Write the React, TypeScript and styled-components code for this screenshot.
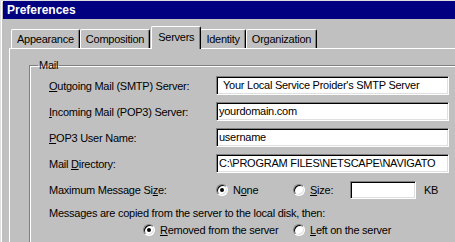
import React from 'react';
import styled, { createGlobalStyle } from 'styled-components';

const GRAY = '#c0c0c0';
const LIGHT = '#dfdfdf';
const SHADOW = '#808080';
const NAVY = '#000080';

const GlobalStyle = createGlobalStyle`
  html, body {
    margin: 0;
    padding: 0;
    background: ${GRAY};
    overflow: hidden;
  }
  body {
    font-family: "Liberation Sans", Arial, sans-serif;
    font-size: 11px;
    letter-spacing: -0.25px;
    color: #000;
  }
`;

interface RadioProps {
  checked?: boolean;
}

const App = () => {
  const tabs = ['Appearance', 'Composition', 'Servers', 'Identity', 'Organization'];

  return (
    <>
      <GlobalStyle />
      <Window>
        <TitleBar>Preferences</TitleBar>
        <TabRow>
          {tabs.map((t) => (
            <Tab key={t} selected={t === 'Servers'}>{t}</Tab>
          ))}
        </TabRow>
        <Panel>
          <Group>
            <Legend>Mail</Legend>
            <Rows>
              <FieldRow>
                <Label><u>O</u>utgoing Mail (SMTP) Server:</Label>
                <TextBox indent={4}>Your Local Service Proider's SMTP Server</TextBox>
              </FieldRow>
              <FieldRow>
                <Label><u>I</u>ncoming Mail (POP3) Server:</Label>
                <TextBox>yourdomain.com</TextBox>
              </FieldRow>
              <FieldRow>
                <Label><u>P</u>OP3 User Name:</Label>
                <TextBox>username</TextBox>
              </FieldRow>
              <FieldRow>
                <Label>Mail <u>D</u>irectory:</Label>
                <TextBox>C:\PROGRAM FILES\NETSCAPE\NAVIGATO</TextBox>
              </FieldRow>
              <FieldRow>
                <Label>Maximum Message Si<u>z</u>e:</Label>
                <Option width={77}>
                  <Radio checked />
                  <span>N<u>o</u>ne</span>
                </Option>
                <Option width={57}>
                  <Radio />
                  <span><u>S</u>ize:</span>
                </Option>
                <SmallBox />
                <Unit>KB</Unit>
              </FieldRow>
              <Note>Messages are copied from the server to the local disk, then:</Note>
              <ChoiceRow>
                <Option width={150}>
                  <Radio checked />
                  <span><u>R</u>emoved from the server</span>
                </Option>
                <Option>
                  <Radio />
                  <span><u>L</u>eft on the server</span>
                </Option>
              </ChoiceRow>
            </Rows>
          </Group>
        </Panel>
      </Window>
    </>
  );
};

export default App;

const Window = styled.div`
  width: 470px;
  height: 260px;
  border-top: 1px solid ${LIGHT};
  border-left: 1px solid ${LIGHT};
  box-shadow: inset 1px 1px #fff;
  padding-left: 2px;
  background: ${GRAY};
`;

const TitleBar = styled.div`
  height: 18px;
  background: ${NAVY};
  color: #fff;
  font-size: 12px;
  font-weight: bold;
  letter-spacing: 0;
  line-height: 18px;
  padding-left: 4px;
`;

const TabRow = styled.div`
  display: flex;
  align-items: flex-end;
  height: 22px;
  margin-top: 7px;
  margin-left: 8px;
  position: relative;
  z-index: 1;
`;

const Tab = styled.div<{ selected: boolean }>`
  height: ${({ selected }) => (selected ? 23 : 19)}px;
  margin: ${({ selected }) => (selected ? '0 -1px -1px 1px' : '0')};
  padding: 0 ${({ selected }) => (selected ? 6 : 5)}px;
  box-sizing: border-box;
  display: flex;
  align-items: center;
  padding-bottom: ${({ selected }) => (selected ? 3 : 0)}px;
  background: ${GRAY};
  border-top: 1px solid #fff;
  border-left: 1px solid #fff;
  border-right: 1px solid #000;
  border-radius: 2px 2px 0 0;
  box-shadow: inset -1px 0 ${SHADOW};
  position: relative;
  z-index: ${({ selected }) => (selected ? 2 : 1)};
  white-space: nowrap;
`;

const Panel = styled.div`
  margin-left: 6px;
  border-top: 1px solid #fff;
  border-left: 1px solid #fff;
  padding: 10px 0 0 19px;
  height: 200px;
`;

const Group = styled.fieldset`
  margin: 0;
  padding: 0 0 20px 8px;
  border: 1px solid ${SHADOW};
  box-shadow: inset 1px 1px #fff, 1px 1px #fff;
  width: 460px;
`;

const Legend = styled.legend`
  padding: 0 1px;
  line-height: 13px;
`;

const Rows = styled.div`
  display: flex;
  flex-direction: column;
  padding: 4px 0 0 11px;
`;

const FieldRow = styled.div`
  display: flex;
  align-items: center;
  height: 19px;
  margin-bottom: 7px;
`;

const Label = styled.div`
  width: 167px;
  flex-shrink: 0;
  white-space: nowrap;
`;

const Sunken = styled.div`
  box-sizing: border-box;
  background: #fff;
  border-top: 1px solid ${SHADOW};
  border-left: 1px solid ${SHADOW};
  border-bottom: 1px solid #fff;
  border-right: 1px solid #fff;
  box-shadow: inset 1px 1px #000, inset -1px -1px ${LIGHT};
`;

const TextBox = styled(Sunken)<{ indent?: number }>`
  width: 233px;
  height: 19px;
  line-height: 17px;
  padding-left: ${({ indent }) => 2 + (indent || 0)}px;
  white-space: nowrap;
  overflow: hidden;
`;

const SmallBox = styled(Sunken)`
  width: 66px;
  height: 18px;
`;

const Unit = styled.span`
  margin-left: 8px;
`;

const Option = styled.div<{ width?: number }>`
  display: flex;
  align-items: center;
  gap: 5px;
  width: ${({ width }) => (width ? `${width}px` : 'auto')};
  flex-shrink: 0;
  white-space: nowrap;
`;

const Radio = styled.span<RadioProps>`
  width: 12px;
  height: 12px;
  box-sizing: border-box;
  border-radius: 50%;
  background: #fff;
  border: 1px solid;
  border-color: ${SHADOW} #fff #fff ${SHADOW};
  box-shadow: inset 1px 1px #000, inset -1px -1px ${LIGHT};
  position: relative;
  flex-shrink: 0;

  &::after {
    content: '';
    display: ${({ checked }) => (checked ? 'block' : 'none')};
    position: absolute;
    left: 3px;
    top: 3px;
    width: 4px;
    height: 4px;
    border-radius: 50%;
    background: #000;
  }
`;

const Note = styled.div`
  margin-top: 1px;
  line-height: 13px;
  white-space: nowrap;
`;

const ChoiceRow = styled.div`
  display: flex;
  align-items: center;
  height: 14px;
  margin-top: 3px;
  padding-left: 94px;
`;
